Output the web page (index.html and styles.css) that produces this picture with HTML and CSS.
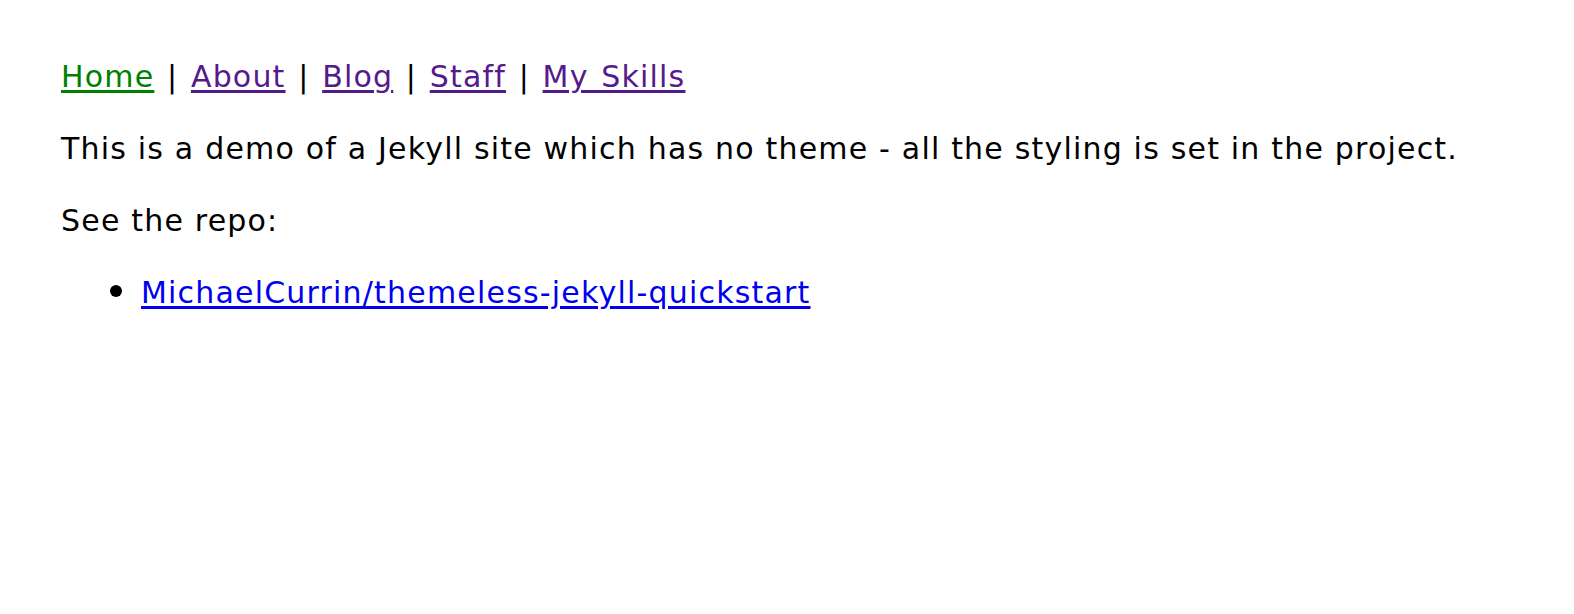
FILE: index.html
```html
<!DOCTYPE html>
<html>
<head>
<meta charset="utf-8">
<link rel="stylesheet" href="styles.css">
</head>
<body>
<nav class="nav"><a class="current" href="#">Home</a> | <a class="visited" href="#">About</a> | <a class="visited" href="#">Blog</a> | <a class="visited" href="#">Staff</a> | <a class="visited" href="#">My Skills</a></nav>
<p class="para">This is a demo of a Jekyll site which has no theme - all the styling is set in the project.</p>
<p class="para">See the repo:</p>
<ul class="list">
<li class="item"><a class="link" href="#">MichaelCurrin/themeless-jekyll-quickstart</a></li>
</ul>
</body>
</html>
```
FILE: styles.css
```css
body {
  margin: 0;
  padding: 26px 61px;
  font-family: Verdana, "DejaVu Sans", sans-serif;
  font-size: 30px;
  line-height: 42px;
  letter-spacing: 1.19px;
  color: #000;
  background: #fff;
}
.nav {
  margin: 30px 0;
  word-spacing: 1.9px;
}
.para {
  margin: 30px 0;
}
.list {
  margin: 30px 0;
  padding-left: 80px;
}
.item {
  height: 42px;
}
.item::marker {
  font-size: 40px;
  line-height: 0;
  letter-spacing: 0;
}
a {
  text-decoration: underline;
  text-underline-offset: 3px;
}
.current { color: #008000; }
.visited { color: #551a8b; }
.link { color: #0000ee; }
```
